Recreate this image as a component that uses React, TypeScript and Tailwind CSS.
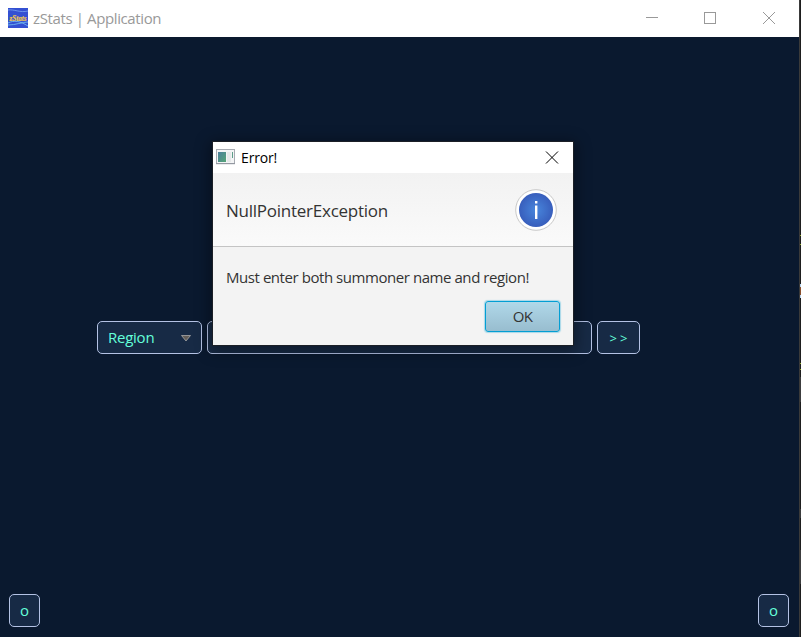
import React from "react";

const font = "font-['Open_Sans','Noto_Sans',sans-serif]";
const control =
  "box-border h-[33px] shrink-0 rounded-[5px] border border-[#b4c2e4] bg-[#172a45] text-[#64ffda]";

function AppLogo() {
  return (
    <svg className="h-5 w-5 shrink-0" viewBox="0 0 20 20">
      <rect width="20" height="20" fill="#3450d2" />
      <path d="M0 2C6 1 12 5 20 3" stroke="#7ba5f2" fill="none" strokeWidth=".8" />
      <path d="M0 15C6 12 12 13 20 18M0 17C8 17 14 14 20 14" stroke="#70b8ee" fill="none" strokeWidth=".9" />
      <text x="1.5" y="12.5" fontSize="7.5" fontWeight="700" fontStyle="italic" fontFamily="Liberation Serif, serif" fill="#f0c84e" stroke="#f0c84e" strokeWidth=".2" textLength="17" lengthAdjust="spacingAndGlyphs">zStats</text>
    </svg>
  );
}

function DialogIcon() {
  return (
    <svg className="mb-px h-4 w-[19px] shrink-0" viewBox="0 0 19 16">
      <defs>
        <linearGradient id="pane" x2="1" y2="1">
          <stop stopColor="#4c7f9c" />
          <stop offset="1" stopColor="#55a577" />
        </linearGradient>
      </defs>
      <rect x=".5" y=".5" width="18" height="14" fill="#f3f4f5" stroke="#a7abb2" />
      <path d="M0 14.7h19" stroke="#8f949d" />
      <rect x="2" y="3" width="8" height="10" fill="url(#pane)" />
      <rect x="11" y="3" width="4" height="10" fill="#e6e8e9" />
      <path d="M16.5 3v6" stroke="#5d9d89" />
    </svg>
  );
}

function Titlebar() {
  return (
    <header className="flex h-[37px] shrink-0 items-center bg-white pl-2 text-[#999]">
      <div className="pb-px"><AppLogo /></div>
      <span className="mb-0.5 ml-[5px] whitespace-nowrap text-[15px] leading-5 tracking-[-0.38px]">zStats | Application</span>
      <svg className="ml-auto mr-[23px] h-[13px] w-[131px]" viewBox="0 0 131 13" fill="none" stroke="#999" shapeRendering="crispEdges">
        <path d="M1 5.5h12" />
        <rect x="59.5" y=".5" width="11" height="11" />
        <path d="M118 0l12 12M130 0l-12 12" shapeRendering="auto" />
      </svg>
    </header>
  );
}

function ErrorDialog() {
  return (
    <section className="absolute left-[213px] top-[142px] flex h-[203px] w-[360px] flex-col bg-[#f3f3f3] text-[#333] shadow-[0_3px_14px_3px_rgba(0,0,0,0.4)] outline outline-[#1b1f26]">
      <div className="flex h-[31px] shrink-0 items-center bg-white pl-[3px] pr-[14px] text-black">
        <DialogIcon />
        <span className="ml-1.5 text-[14px] leading-5 tracking-[-0.15px]">Error!</span>
        <svg className="ml-auto h-[13px] w-[14px]" viewBox="0 0 14 13" stroke="black" strokeWidth="1">
          <path d="M1 .5l12 12M13 .5l-12 12" />
        </svg>
      </div>
      <div className="flex h-[74px] shrink-0 items-center justify-between border-b border-[#c4c4c4] bg-linear-to-b from-[#f2f2f2] to-[#fafafa] pl-[13px] pr-4">
        <span className="mt-0.5 text-[17px] leading-6 tracking-[-0.25px]">NullPointerException</span>
        <svg className="h-[42px] w-[42px]" viewBox="0 0 42 42">
          <defs>
            <radialGradient id="info">
              <stop stopColor="#4886dc" />
              <stop offset="1" stopColor="#385ebc" />
            </radialGradient>
          </defs>
          <circle cx="21" cy="21" r="20.3" fill="white" stroke="#c8c8c8" />
          <circle cx="21" cy="21" r="17" fill="url(#info)" />
          <path d="M20 12h2.4v2.4h-2.4zM20 16.5h2.4v13.5h-2.4z" fill="white" />
        </svg>
      </div>
      <p className="mt-[19px] pl-[13px] whitespace-nowrap text-[15px] leading-[22px] tracking-[-0.44px]">Must enter both summoner name and region!</p>
      <button className="mr-[13px] mt-[13px] flex h-[31px] w-[75px] shrink-0 items-center justify-center self-end rounded-[3px] border border-[#039ed3] bg-linear-to-b from-[#b0d8e9] to-[#98bdcf] text-[15px] tracking-[-0.6px] shadow-[0_0_1px_1px_#a8d8e8]">OK</button>
    </section>
  );
}

export default function App() {
  return (
    <div className={`relative flex h-[637px] w-[801px] overflow-hidden bg-[#0a192f] ${font}`}>
      <div className="flex w-[799px] shrink-0 flex-col">
        <Titlebar />
        <main className="flex flex-1 flex-col justify-between pt-[284px] pb-2.5">
          <div className="flex gap-[5px] pl-[97px]">
            <button className={`${control} flex w-[105px] items-center justify-between pl-2.5 pr-2.5 text-[15px] tracking-[-0.25px]`}>
              <span>Region</span>
              <svg className="mt-px h-[7px] w-[10px]" viewBox="0 0 10 7"><path d="M.5 .5h9L5 6z" fill="#625d58" stroke="#aaa" strokeWidth=".8" /></svg>
            </button>
            <div className={`${control} w-[385px]`} />
            <button className={`${control} flex w-[43px] items-center justify-center gap-[3px] pt-0.5 text-[13px]`}>
              <span>&gt;</span>
              <span>&gt;</span>
            </button>
          </div>
          <div className="flex justify-between pl-[9px] pr-2.5">
            <button className={`${control} w-[31px] text-[15px]`}>o</button>
            <button className={`${control} w-[31px] text-[15px]`}>o</button>
          </div>
        </main>
      </div>
      <div className="w-px shrink-0 bg-[#3a3a3a]" />
      <svg className="h-[637px] w-px shrink-0" viewBox="0 0 1 637" shapeRendering="crispEdges">
        <rect width="1" height="637" fill="#1e1e1e" />
        <path d="M0 235h1v1H0zM0 244h1v1H0zM0 363h1v1H0zM0 369h1v1H0z" fill="#91a82c" />
        <path d="M0 284h1v3H0zM0 295h1v3H0z" fill="#b8d4ed" />
        <path d="M0 287h1v8H0z" fill="#884e2c" />
        <path d="M0 377h1v25H0zM0 509h1v9H0zM0 550h1v34H0z" fill="#3c3d3e" />
      </svg>
      <ErrorDialog />
    </div>
  );
}
